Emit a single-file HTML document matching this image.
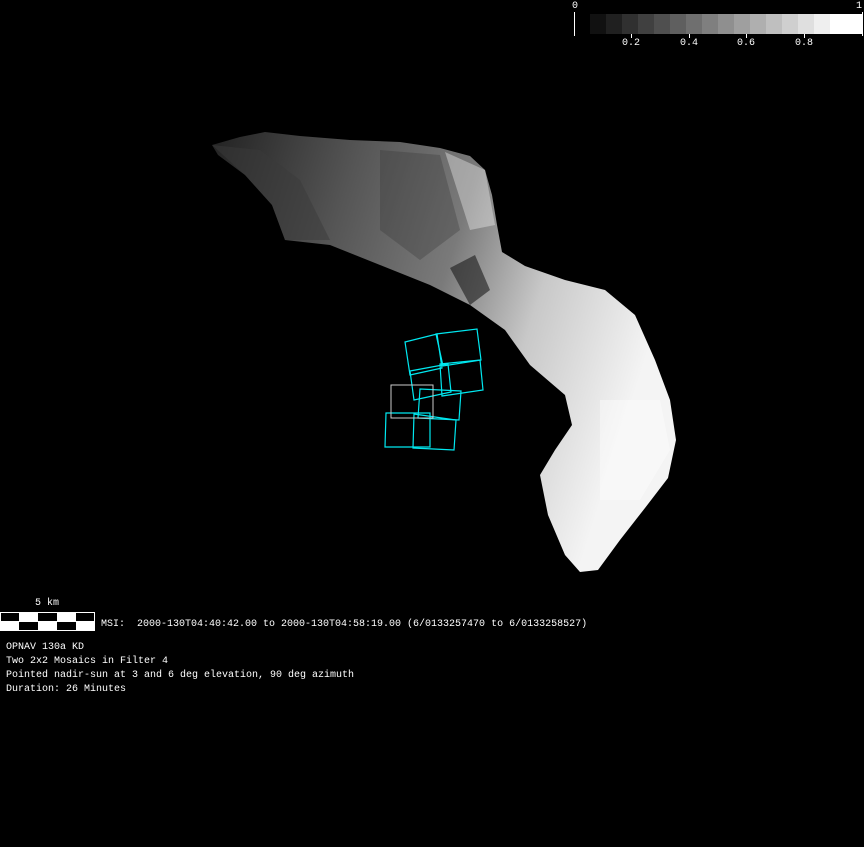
<!DOCTYPE html><html><head><style>
body{margin:0;width:864px;height:847px;background:#000;overflow:hidden;position:relative;font-family:"Liberation Mono",monospace;color:#fff;font-size:10px}
.t{position:absolute;white-space:pre;line-height:14px}
</style></head><body>
<svg width="864" height="847" style="position:absolute;left:0;top:0">
<defs>
<linearGradient id="g" x1="0" y1="0" x2="1" y2="0.3">
<stop offset="0" stop-color="#222"/><stop offset="0.3" stop-color="#555"/><stop offset="0.55" stop-color="#7a7a7a"/><stop offset="0.75" stop-color="#c8c8c8"/><stop offset="1" stop-color="#f4f4f4"/>
</linearGradient>
</defs>
<polygon fill="url(#g)" points="212,145 240,137 265,132 300,136 350,140 400,142 440,148 470,156 485,170 492,195 497,225 502,252 525,266 565,280 605,290 635,315 655,360 670,400 676,440 668,478 645,508 620,540 598,570 580,572 565,555 548,515 540,475 555,450 572,425 565,395 530,365 505,330 470,305 430,285 380,265 330,245 285,240 272,205 245,175 218,155"/>
<polygon fill="#3a3a3a" opacity="0.5" points="212,145 260,150 300,180 330,240 285,240 272,205 245,175"/>
<polygon fill="#1a1a1a" opacity="0.6" points="450,268 475,255 490,290 470,305"/>
<polygon fill="#333" opacity="0.3" points="380,150 440,155 460,230 420,260 380,230"/>
<polygon fill="#fff" opacity="0.4" points="600,400 660,400 670,450 640,500 600,500"/>
<polygon fill="#fff" opacity="0.35" points="445,152 485,170 495,225 470,230"/>
<g fill="none" stroke="#00e8f0" stroke-width="1.2">
<polygon points="405,342 437,334 442,368 410,375"/>
<polygon points="436,334 477,329 481,360 443,366"/>
<polygon points="410,371 448,364 451,392 414,400"/>
<polygon points="440,364 480,360 483,390 442,396"/>
<polygon points="420,389 461,391 459,420 418,418"/>
<polygon points="386,413 430,413 430,447 385,447"/>
<polygon points="414,414 456,420 454,450 413,448"/>
</g>
<polygon fill="none" stroke="#ccc" stroke-width="1" points="391,385 433,385 433,418 391,418"/>
<g>
<rect x="590" y="14" width="16" height="20" fill="#111"/><rect x="606" y="14" width="16" height="20" fill="#202020"/><rect x="622" y="14" width="16" height="20" fill="#303030"/><rect x="638" y="14" width="16" height="20" fill="#404040"/><rect x="654" y="14" width="16" height="20" fill="#4f4f4f"/><rect x="670" y="14" width="16" height="20" fill="#5f5f5f"/><rect x="686" y="14" width="16" height="20" fill="#6f6f6f"/><rect x="702" y="14" width="16" height="20" fill="#7f7f7f"/><rect x="718" y="14" width="16" height="20" fill="#8f8f8f"/><rect x="734" y="14" width="16" height="20" fill="#9f9f9f"/><rect x="750" y="14" width="16" height="20" fill="#afafaf"/><rect x="766" y="14" width="16" height="20" fill="#bfbfbf"/><rect x="782" y="14" width="16" height="20" fill="#cfcfcf"/><rect x="798" y="14" width="16" height="20" fill="#dfdfdf"/><rect x="814" y="14" width="16" height="20" fill="#efefef"/><rect x="830" y="14" width="32" height="20" fill="#fff"/>
</g>
<g stroke="#fff" stroke-width="1">
<line x1="574.5" y1="12" x2="574.5" y2="36"/><line x1="862.5" y1="12" x2="862.5" y2="36"/>
<line x1="631.5" y1="34" x2="631.5" y2="38"/><line x1="689.5" y1="34" x2="689.5" y2="38"/><line x1="746.5" y1="34" x2="746.5" y2="38"/><line x1="804.5" y1="34" x2="804.5" y2="38"/>
</g>
<rect x="0" y="612" width="95" height="19" fill="#fff"/>
<g fill="#000">
<rect x="1" y="613" width="18" height="8"/><rect x="38" y="613" width="19" height="8"/><rect x="76" y="613" width="18" height="8"/>
<rect x="19" y="622" width="19" height="8"/><rect x="57" y="622" width="19" height="8"/>
</g>
</svg>
<div class="t" style="left:572px;top:0px">0</div>
<div class="t" style="left:856px;top:0px">1</div>
<div class="t" style="left:622px;top:37px">0.2</div>
<div class="t" style="left:680px;top:37px">0.4</div>
<div class="t" style="left:737px;top:37px">0.6</div>
<div class="t" style="left:795px;top:37px">0.8</div>
<div class="t" style="left:35px;top:597px">5 km</div>
<div class="t" style="left:101px;top:618px">MSI:  2000-130T04:40:42.00 to 2000-130T04:58:19.00 (6/0133257470 to 6/0133258527)</div>
<div class="t" style="left:6px;top:641px">OPNAV 130a KD
Two 2x2 Mosaics in Filter 4
Pointed nadir-sun at 3 and 6 deg elevation, 90 deg azimuth
Duration: 26 Minutes</div>
</body></html>
